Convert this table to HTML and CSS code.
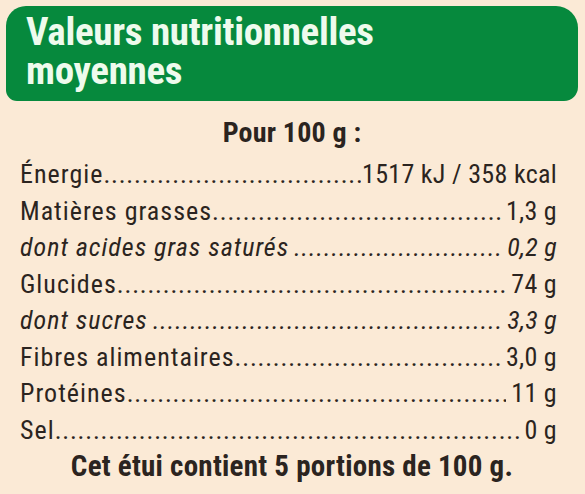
FILE: index.html
```html
<!DOCTYPE html>
<html lang="fr">
<head>
    <meta charset="UTF-8">
    <title>Valeurs nutritionnelles moyennes</title>
    <link rel="stylesheet" href="styles.css">
</head>
<body>
    <div class="label">
        <div class="header">
            <h1>Valeurs nutritionnelles<br>moyennes</h1>
        </div>

        <p class="per">Pour 100 g :</p>

        <div class="rows">
            <div class="row tight">
                <span class="name">Énergie</span>
                <span class="dots">.................................................</span>
                <span class="value">1517 kJ / 358 kcal</span>
            </div>
            <div class="row">
                <span class="name">Matières grasses</span>
                <span class="dots">......................................................</span>
                <span class="value">1,3 g</span>
            </div>
            <div class="row sub">
                <span class="name">dont acides gras saturés</span>
                <span class="dots">.........................................</span>
                <span class="value">0,2 g</span>
            </div>
            <div class="row">
                <span class="name">Glucides</span>
                <span class="dots">.....................................................................</span>
                <span class="value">74 g</span>
            </div>
            <div class="row sub">
                <span class="name">dont sucres</span>
                <span class="dots">................................................................</span>
                <span class="value">3,3 g</span>
            </div>
            <div class="row">
                <span class="name">Fibres alimentaires</span>
                <span class="dots">..................................................</span>
                <span class="value">3,0 g</span>
            </div>
            <div class="row">
                <span class="name">Protéines</span>
                <span class="dots">....................................................................</span>
                <span class="value">11 g</span>
            </div>
            <div class="row tight">
                <span class="name">Sel</span>
                <span class="dots">.....................................................................................</span>
                <span class="value">0 g</span>
            </div>
        </div>

        <p class="note">Cet étui contient 5 portions de 100 g.</p>
    </div>
</body>
</html>
```

FILE: styles.css
```css
body {
    margin: 0;
    background-color: #fbead6;
    color: #2b2420;
    font-family: 'Roboto Condensed', Roboto, sans-serif;
    font-stretch: condensed;
}
.label {
    padding: 6px 7px 0 6px;
}
.header {
    background-color: #06893d;
    border-radius: 20px 22px 14px 11px;
    padding: 7px 20px 10px;
}
.header h1 {
    margin: 0;
    font-size: 39px;
    line-height: 39px;
    font-weight: bold;
    letter-spacing: -0.3px;
    color: #eefbed;
}
.per {
    margin: 14px 0 0;
    text-align: center;
    font-size: 28px;
    line-height: 36px;
    font-weight: bold;
    letter-spacing: 0.2px;
}
.rows {
    margin-top: 5px;
    padding: 0 21px 0 14px;
}
.row {
    display: flex;
    align-items: baseline;
    font-size: 26px;
    line-height: 36.5px;
    letter-spacing: 1px;
    white-space: nowrap;
}
.row.sub {
    font-style: italic;
}
.row.sub .dots {
    padding-left: 5px;
}
.dots {
    flex: 1;
    overflow: hidden;
    letter-spacing: 0.8px;
}
.value {
    padding-left: 5px;
    letter-spacing: 0.3px;
}
.row.tight .value {
    padding-left: 1px;
}
.note {
    margin: 0;
    text-align: center;
    font-size: 29px;
    line-height: 36px;
    font-weight: bold;
    letter-spacing: 0.25px;
}
```
